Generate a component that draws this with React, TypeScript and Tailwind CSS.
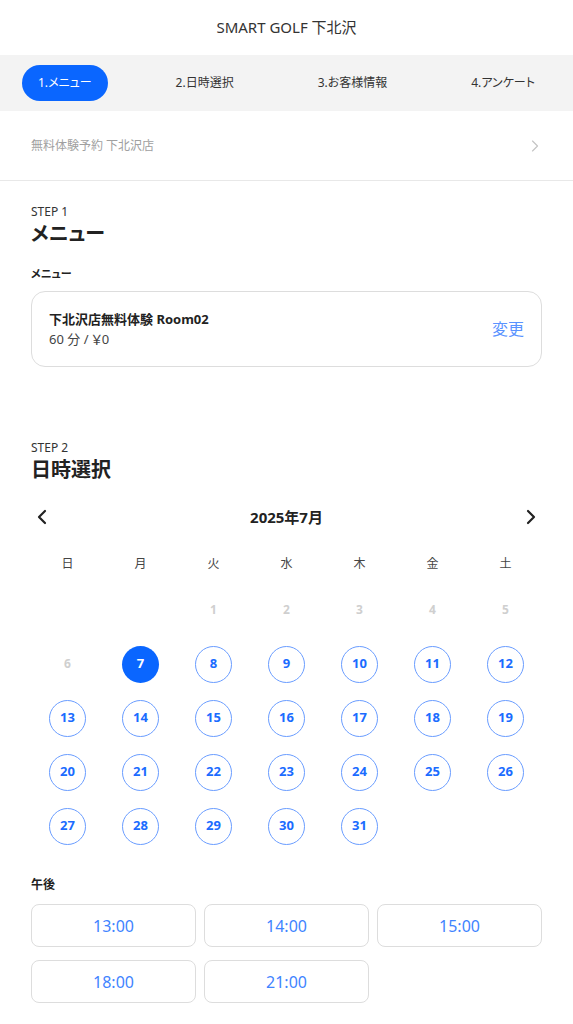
import { ChevronLeft, ChevronRight } from "lucide-react";

const TABS = ["1.メニュー", "2.日時選択", "3.お客様情報", "4.アンケート"];
const WEEK = ["日", "月", "火", "水", "木", "金", "土"];
const TIMES = ["13:00", "14:00", "15:00", "18:00", "21:00"];

// July 2025 starts on Tuesday; 1-6 are past, 7 is selected
const DAYS: (number | null)[] = [null, null, ...Array.from({ length: 31 }, (_, i) => i + 1)];

function DayCell({ day }: { day: number | null }) {
  if (day === null) return <div className="h-[54px]" />;
  if (day < 7) {
    return (
      <div className="h-[54px] flex items-center justify-center text-[12px] font-bold text-[#cfcfcf]">
        {day}
      </div>
    );
  }
  if (day === 7) {
    return (
      <div className="h-[54px] flex items-center justify-center">
        <span className="w-[37px] h-[37px] rounded-full bg-[#0a66ff] text-white text-[13px] font-bold flex items-center justify-center">
          {day}
        </span>
      </div>
    );
  }
  return (
    <div className="h-[54px] flex items-center justify-center">
      <span className="w-[37px] h-[37px] rounded-full border-[1.5px] border-[#6a9dff] text-[#1b6cff] text-[13px] font-bold flex items-center justify-center">
        {day}
      </span>
    </div>
  );
}

export default function App() {
  return (
    <div
      className="w-[573px] min-h-[1024px] bg-white text-[#222] [font-feature-settings:'palt']"
      style={{ fontFamily: '"Noto Sans", "Noto Sans CJK JP", sans-serif' }}
    >
      <header className="h-[55px] flex items-center justify-center text-[15px] text-[#333]">
        SMART GOLF 下北沢
      </header>

      <nav className="h-[56px] bg-[#f3f3f3] flex items-center justify-between px-[22px]">
        {TABS.map((t, i) =>
          i === 0 ? (
            <span key={t} className="h-9 px-4 rounded-full bg-[#0a66ff] text-white text-[12px] flex items-center">
              {t}
            </span>
          ) : (
            <span key={t} className="h-9 px-4 text-[12px] text-[#333] flex items-center">
              {t}
            </span>
          )
        )}
      </nav>

      <div className="h-[70px] flex items-center justify-between px-[31px] border-b border-[#e8e8e8]">
        <span className="text-[12px] text-[#a0a0a0]">無料体験予約 下北沢店</span>
        <ChevronRight className="w-5 h-5 -mr-[3px] text-[#c4c4c4]" strokeWidth={1.4} />
      </div>

      <main className="px-[31px]">
        <section className="pt-[24px]">
          <p className="text-[12px] leading-[14px] text-[#333]">STEP 1</p>
          <h2 className="text-[20px] leading-[28px] font-bold mt-[1px]">メニュー</h2>
          <p className="text-[11px] leading-[16px] font-bold mt-[18px]">メニュー</p>
          <div className="mt-[9px] border border-[#dddddd] rounded-[14px] px-[17px] py-[17px] flex items-center justify-between">
            <div>
              <p className="text-[13px] leading-[20px] font-bold">下北沢店無料体験 Room02</p>
              <p className="text-[13px] leading-[20px] text-[#444]">60 分 / ￥0</p>
            </div>
            <span className="text-[16px] text-[#5a93ff]">変更</span>
          </div>
        </section>

        <section className="pt-[74px]">
          <p className="text-[12px] leading-[14px] text-[#333]">STEP 2</p>
          <h2 className="text-[20px] leading-[28px] font-bold mt-[1px]">日時選択</h2>

          <div className="mt-[17px] h-[32px] flex items-center justify-between">
            <ChevronLeft className="w-[24px] h-[24px] -ml-[1px] text-[#222]" strokeWidth={2.2} />
            <span className="text-[15px] font-bold">2025年7月</span>
            <ChevronRight className="w-[24px] h-[24px] -mr-[1px] text-[#222]" strokeWidth={2.2} />
          </div>

          <div className="mt-[21px] grid grid-cols-7">
            {WEEK.map((w) => (
              <div key={w} className="h-[20px] flex items-center justify-center text-[12px] text-[#444]">
                {w}
              </div>
            ))}
          </div>

          <div className="mt-[9px] grid grid-cols-7">
            {DAYS.map((d, i) => (
              <DayCell key={i} day={d} />
            ))}
          </div>

          <p className="mt-[24px] text-[12px] leading-[16px] font-bold">午後</p>
          <div className="mt-[11px] grid grid-cols-3 gap-x-[8px] gap-y-[13px] pb-[24px]">
            {TIMES.map((t) => (
              <button
                key={t}
                className="h-[43px] border border-[#dddddd] rounded-[8px] text-[16px] text-[#3f84ff] flex items-center justify-center"
              >
                {t}
              </button>
            ))}
          </div>
        </section>
      </main>
    </div>
  );
}
